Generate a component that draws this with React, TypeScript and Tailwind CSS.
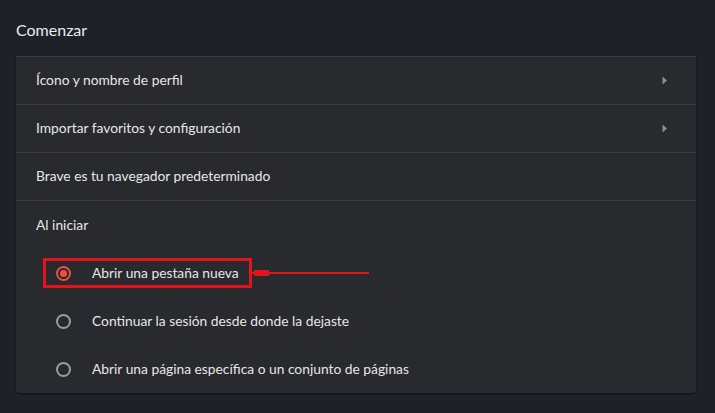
export default function App() {
  const rows = ["Ícono y nombre de perfil", "Importar favoritos y configuración"];
  const options = [
    "Abrir una pestaña nueva",
    "Continuar la sesión desde donde la dejaste",
    "Abrir una página específica o un conjunto de páginas",
  ];

  return (
    <div
      className="w-[715px] h-[413px] bg-[#1f2129] text-[#e6e6e8] overflow-hidden"
      style={{ fontFamily: "Lato, 'Open Sans', sans-serif" }}
    >
      <div className="h-[56px] pl-4 pt-[20px] text-[16px] leading-[20px] text-[#ececee]">Comenzar</div>

      <div className="ml-4 w-[680px] bg-[#292a2e] border-t border-[#3b3c40] rounded-b-[4px] shadow-[0_1px_2px_rgba(0,0,0,0.5)] text-[13.8px]">
        {rows.map((r) => (
          <div key={r} className="h-12 flex items-center pl-5 pr-7 border-b border-[#3d3e42]">
            <span className="flex-1">{r}</span>
            <svg width="6" height="9" viewBox="0 0 6 9">
              <path d="M0.5 0.5 L5 4.5 L0.5 8.5 Z" fill="#8d8e92" />
            </svg>
          </div>
        ))}
        <div className="h-12 flex items-center pl-5 border-b border-[#3d3e42]">
          Brave es tu navegador predeterminado
        </div>
        <div className="h-12 flex items-center pl-5">Al iniciar</div>

        {options.map((o, i) => (
          <div key={o} className="h-12 flex items-center pl-10">
            <div
              className={
                i === 0
                  ? "relative flex items-center h-[30px] -ml-[13px] pl-[10px] pr-[10px] border-[3px] border-[#e2151f]"
                  : "flex items-center"
              }
            >
              {i === 0 ? (
                <div className="w-[15px] h-[15px] rounded-full border-2 border-[#f0503b] flex items-center justify-center">
                  <div className="w-[7px] h-[7px] rounded-full bg-[#f0503b]" />
                </div>
              ) : (
                <div className="w-[15px] h-[15px] rounded-full border-2 border-[#9b9ca0]" />
              )}
              <span className="ml-[21px]">{o}</span>
              {i === 0 && (
                <svg className="absolute left-full top-1/2 -translate-y-1/2 ml-[1px]" width="120" height="8" viewBox="0 0 120 8">
                  <rect x="0" y="3" width="119" height="2" fill="#e2151f" />
                  <rect x="4" y="1" width="15" height="6" fill="#e2151f" />
                </svg>
              )}
            </div>
          </div>
        ))}
      </div>
    </div>
  );
}
